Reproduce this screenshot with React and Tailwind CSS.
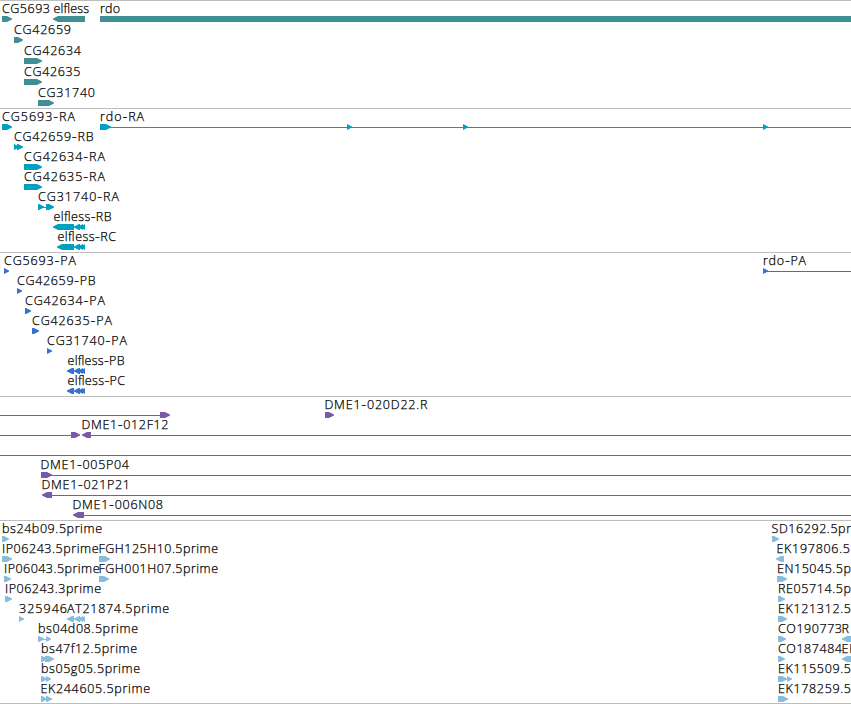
import React from 'react';

const WIDTH = 851;

// label: [text, x, length]
// shape: [kind, start, end], kind is 'r' (forward arrow), 'l' (reverse arrow), 'bar' or 'line'
const tracks = [
  {
    name: 'genes',
    color: '#3f8f94',
    className: 'h-[108px]',
    pitch: 21,
    rows: [
      {
        labels: [['CG5693', 2, 48], ['elfless', 53.5, 35.5], ['rdo', 100, 20]],
        shapes: [['r', 2, 12], ['l', 53, 85], ['bar', 100, 851]],
      },
      { labels: [['CG42659', 14, 57]], shapes: [['r', 14, 23]] },
      { labels: [['CG42634', 24, 57]], shapes: [['r', 24, 42]] },
      { labels: [['CG42635', 24, 56.5]], shapes: [['r', 24, 42]] },
      { labels: [['CG31740', 38, 57]], shapes: [['r', 38, 54]] },
    ],
  },
  {
    name: 'transcripts',
    color: '#00a0c0',
    className: 'h-[144px]',
    pitch: 20,
    rows: [
      {
        labels: [['CG5693-RA', 2, 73], ['rdo-RA', 100, 44]],
        shapes: [['r', 2, 12], ['line', 110, 851], ['r', 100, 111], ['r', 347, 352], ['r', 463, 468], ['r', 763, 768]],
      },
      { labels: [['CG42659-RB', 14, 79.5]], shapes: [['r', 14, 19], ['r', 17, 23]] },
      { labels: [['CG42634-RA', 24, 81]], shapes: [['r', 24, 42]] },
      { labels: [['CG42635-RA', 24, 81]], shapes: [['r', 24, 42]] },
      { labels: [['CG31740-RA', 38, 81]], shapes: [['line', 42, 47], ['r', 38, 44], ['r', 46, 54]] },
      { labels: [['elfless-RB', 53.5, 58]], shapes: [['l', 53, 74], ['l', 74, 80], ['l', 78, 83], ['l', 81, 85]] },
      { labels: [['elfless-RC', 57.5, 58.5]], shapes: [['l', 57, 74], ['l', 74, 80], ['l', 78, 83], ['l', 81, 85]] },
    ],
  },
  {
    name: 'proteins',
    color: '#3572cf',
    className: 'h-[144px]',
    pitch: 20,
    rows: [
      {
        labels: [['CG5693-PA', 4, 72], ['rdo-PA', 763, 43]],
        shapes: [['r', 4, 9], ['line', 765, 851], ['r', 763, 768]],
      },
      { labels: [['CG42659-PB', 17, 78.5]], shapes: [['r', 17, 22]] },
      { labels: [['CG42634-PA', 25, 80]], shapes: [['r', 25, 31]] },
      { labels: [['CG42635-PA', 32, 80]], shapes: [['r', 32, 39]] },
      { labels: [['CG31740-PA', 47, 80]], shapes: [['r', 47, 52]] },
      { labels: [['elfless-PB', 67.5, 57]], shapes: [['l', 67, 74], ['l', 74, 80], ['l', 78, 83], ['l', 81, 85]] },
      { labels: [['elfless-PC', 67.5, 57.5]], shapes: [['l', 67, 74], ['l', 74, 80], ['l', 78, 83], ['l', 81, 85]] },
    ],
  },
  {
    name: 'clones',
    color: '#785aa8',
    className: 'h-[124px]',
    pitch: 20,
    rows: [
      { labels: [['DME1-020D22.R', 324.5, 103]], shapes: [['line', 0, 161], ['r', 160, 170], ['r', 325, 334]] },
      {
        labels: [['DME1-012F12', 81.5, 87]],
        shapes: [['line', 0, 72], ['r', 71, 80], ['l', 82, 91], ['line', 90, 851]],
      },
      { labels: [], shapes: [['line', 0, 851]] },
      { labels: [['DME1-005P04', 40.5, 88.5]], shapes: [['r', 41, 52], ['line', 48, 851]] },
      { labels: [['DME1-021P21', 41.5, 88.5]], shapes: [['l', 42, 52], ['line', 51, 851]] },
      { labels: [['DME1-006N08', 72.5, 90.5]], shapes: [['l', 73, 84], ['line', 83, 851]] },
    ],
  },
  {
    name: 'ests',
    color: '#87bcdd',
    className: 'h-[184px] border-b',
    pitch: 20,
    rows: [
      {
        labels: [['bs24b09.5prime', 2, 100], ['SD16292.5pr', 771.5, 79.5]],
        shapes: [['r', 2, 9], ['r', 772, 779]],
      },
      {
        labels: [['IP06243.5prime', 2, 96.5], ['FGH125H10.5prime', 98.5, 119.5], ['EK197806.5', 776.5, 73.5]],
        shapes: [['r', 2, 12], ['r', 99, 110], ['l', 776, 784]],
      },
      {
        labels: [['IP06043.5prime', 4, 95.5], ['FGH001H07.5prime', 98.5, 119.5], ['EN15045.5p', 777, 74]],
        shapes: [['r', 4, 11], ['r', 99, 109], ['r', 777, 787]],
      },
      {
        labels: [['IP06243.3prime', 5, 96], ['RE05714.5p', 778, 73]],
        shapes: [['r', 5, 12], ['r', 778, 785]],
      },
      {
        labels: [['325946', 19, 48], ['AT21874.5prime', 67, 102], ['EK121312.5', 778, 73]],
        shapes: [['r', 19, 24], ['l', 67, 74], ['l', 74, 80], ['l', 78, 83], ['l', 81, 85], ['r', 778, 787]],
      },
      {
        labels: [['bs04d08.5prime', 38, 100], ['CO190773', 778, 64], ['R', 841.5, 8.5]],
        shapes: [['line', 42, 47], ['r', 38, 44], ['r', 46, 51], ['r', 778, 786], ['l', 842, 856]],
      },
      {
        labels: [['bs47f12.5prime', 41, 96], ['CO187484', 778, 64], ['EK', 841.5, 15]],
        shapes: [['r', 41, 47], ['r', 45, 54], ['r', 778, 785], ['l', 842, 856]],
      },
      {
        labels: [['bs05g05.5prime', 41, 99], ['EK115509.5', 778, 73]],
        shapes: [['r', 41, 47], ['r', 46, 51], ['r', 778, 787], ['r', 787, 792]],
      },
      {
        labels: [['EK244605.5prime', 40.5, 109.5], ['EK178259.5', 778, 73]],
        shapes: [['r', 41, 47], ['r', 46, 52], ['r', 778, 788]],
      },
    ],
  },
];

function Shape({ kind, start, end }) {
  if (kind === 'line') {
    return <rect x={start} y="19" width={end - start} height="1" />;
  }
  if (kind === 'bar') {
    return <rect x={start} y="16" width={end - start} height="6" />;
  }
  const head = Math.min(5, end - start);
  const points =
    kind === 'r'
      ? `${start},16 ${end - head},16 ${end},18.5 ${end},19.5 ${end - head},22 ${start},22`
      : `${end},16 ${start + head},16 ${start},18.5 ${start},19.5 ${start + head},22 ${end},22`;
  return <polygon points={points} />;
}

function Label({ text, x, length }) {
  const [id, suffix] = text.split('-');
  return (
    <text x={x} y="13" textLength={length} className="fill-black stroke-black [stroke-width:0.25px] text-[12.5px] font-light">
      {id}
      {/* slightly larger, the hyphen is too short otherwise */}
      {suffix && <tspan className="text-[15px]">-</tspan>}
      {suffix}
    </text>
  );
}

function Track({ track }) {
  return (
    <section className={`border-t border-[#bebebe] overflow-hidden ${track.className}`}>
      {/* rows start on the border line, so the drawing is pulled up by its width */}
      <svg className="block -mt-px w-[851px]" width={WIDTH} height={track.rows.length * track.pitch + 3} aria-label={track.name}>
        {track.rows.map((row, i) => (
          <g key={i} transform={`translate(0 ${i * track.pitch})`}>
            <g fill={track.color}>
              {row.shapes.map(([kind, start, end], j) => (
                <Shape key={j} kind={kind} start={start} end={end} />
              ))}
            </g>
            {row.labels.map(([text, x, length]) => (
              <Label key={text} text={text} x={x} length={length} />
            ))}
          </g>
        ))}
      </svg>
    </section>
  );
}

export default function App() {
  return (
    <main className="flex flex-col w-[851px] h-[704px] overflow-hidden bg-white font-['Open_Sans','Noto_Sans',sans-serif]">
      {tracks.map((track) => (
        <Track key={track.name} track={track} />
      ))}
    </main>
  );
}
